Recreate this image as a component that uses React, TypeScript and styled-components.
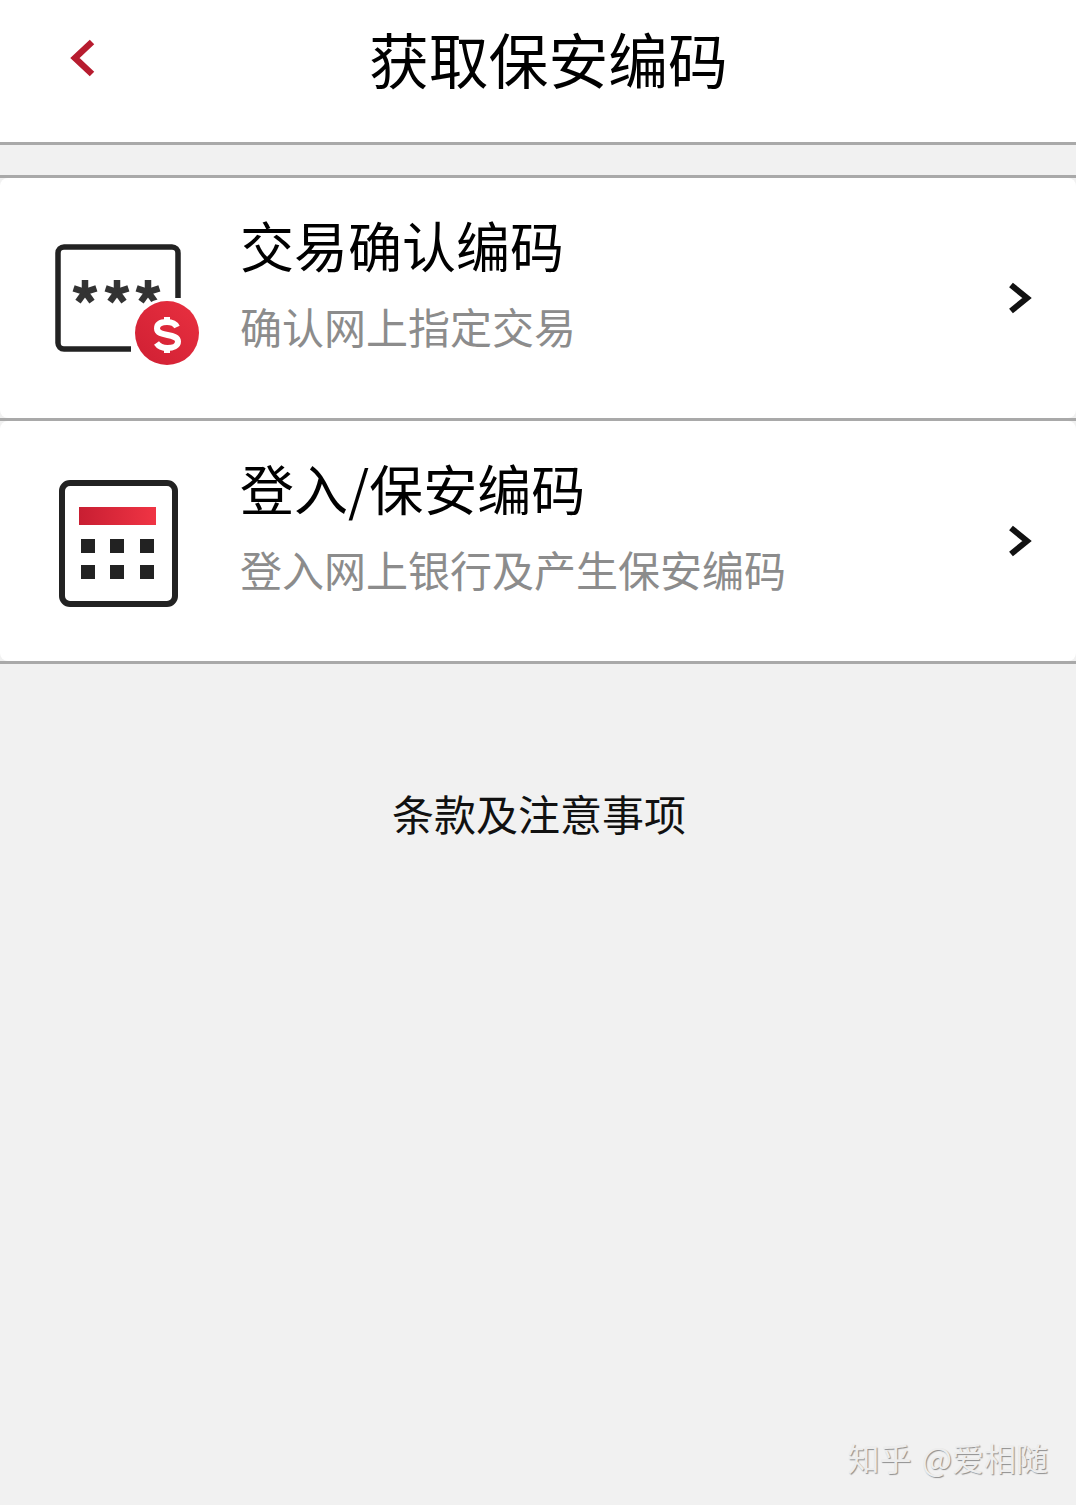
import React, { JSX } from 'react';
import styled, { createGlobalStyle } from 'styled-components';

const GlobalStyle = createGlobalStyle`
  html, body {
    margin: 0;
    padding: 0;
    background: #f1f1f1;
  }
  body {
    font-family: "Noto Sans CJK SC", "Noto Sans", sans-serif;
  }
`;

const Page = styled.div`
  position: relative;
  width: 1076px;
  height: 1505px;
  overflow: hidden;
  background: #f1f1f1;
`;

const Header = styled.header`
  display: grid;
  grid-template-columns: 369px auto;
  align-items: center;
  height: 116px;
  padding-bottom: 26px;
  background: #fff;
  border-bottom: 3px solid #a9a9a9;
`;

const BackIcon = styled.svg`
  display: block;
  width: 30px;
  height: 42px;
  margin: 0 0 0 70px;
`;

const Title = styled.h1`
  margin: 0;
  font-size: 59.8px;
  font-weight: 400;
  line-height: 116px;
  color: #000;
`;

const List = styled.div`
  margin-top: 30px;
  border-top: 3px solid #a9a9a9;
`;

const CardRow = styled.div`
  border-bottom: 3px solid #a9a9a9;
`;

const Card = styled.div`
  display: grid;
  grid-template-columns: 50px 190px 1fr 76px;
  align-items: center;
  height: 240px;
  background: #fff;
  border-radius: 8px;
`;

const CardIcon = styled.svg`
  display: block;
  grid-column: 2;
  width: 160px;
  height: 140px;
`;

const CardText = styled.div`
  display: flex;
  flex-direction: column;
  gap: 28px;
  margin-top: -29px;
`;

const CardTitle = styled.div`
  font-size: 54px;
  line-height: 56px;
  color: #000;
  white-space: nowrap;
`;

const CardSub = styled.div`
  font-size: 42px;
  line-height: 50px;
  color: #8c8c8c;
  white-space: nowrap;
`;

const Chevron = styled.svg`
  display: block;
  width: 30px;
  height: 42px;
  margin-left: 4px;
`;

const Terms = styled.div`
  margin-top: 119px;
  padding-left: 2px;
  font-size: 42px;
  line-height: 60px;
  text-align: center;
  color: #111;
`;

const Watermark = styled.div`
  position: absolute;
  right: 28px;
  top: 1435px;
  font-size: 32px;
  line-height: 44px;
  word-spacing: 3px;
  color: #ededed;
  white-space: pre;
  text-shadow: 1px 1px 1px #8e8e8e;
`;

const STAR_ARMS: string[] = ['0 -12', '11.4 -3.7', '7 9.7', '-7 9.7', '-11.4 -3.7'];

function KeyIcon(): JSX.Element {
	const stars: number[] = [35, 67, 98];
	return (
		<CardIcon viewBox="0 0 160 140">
			<defs>
				<linearGradient id="badge" x1="0" y1="1" x2="1" y2="0">
					<stop offset="0" stopColor="#cf1f33" />
					<stop offset="1" stopColor="#e93040" />
				</linearGradient>
			</defs>
			<path d="M81 121H14a6 6 0 0 1-6-6V25a6 6 0 0 1 6-6h108a6 6 0 0 1 6 6v45" fill="none" stroke="#222" strokeWidth="5.5" />
			{stars.map((x: number) => (
				<g key={x} stroke="#333" strokeWidth="6.5">
					{STAR_ARMS.map((arm: string) => <path key={arm} d={`M${x} 64l${arm}`} />)}
				</g>
			))}
			<circle cx="117" cy="105" r="35" fill="#fff" />
			<circle cx="117" cy="105" r="32" fill="url(#badge)" />
			<path d="M127 99c-2-4-6-5-10-5c-6 0-10 2-10 6.5c0 9 21 4 21 13c0 4.5-5 6.5-10.5 6.5c-4.5 0-9-2-11-5" fill="none" stroke="#fff" strokeWidth="6" />
			<path d="M117 89v6M117 119v6" stroke="#fff" strokeWidth="6" />
		</CardIcon>
	);
}

function TokenIcon(): JSX.Element {
	const columns: number[] = [38, 67, 97];
	const rows: number[] = [75, 101];
	return (
		<CardIcon viewBox="0 0 160 140">
			<defs>
				<linearGradient id="bar" x1="0" y1="0" x2="1" y2="0">
					<stop offset="0" stopColor="#c81e32" />
					<stop offset="1" stopColor="#f03444" />
				</linearGradient>
			</defs>
			<rect x="12" y="12" width="113" height="121" rx="8" fill="none" stroke="#222" strokeWidth="6" />
			<rect x="29" y="36" width="77" height="18" fill="url(#bar)" />
			{rows.map((y: number) => columns.map((x: number) => (
				<rect key={`${x}-${y}`} x={x - 7} y={y - 7} width="14" height="14" fill="#222" />
			)))}
		</CardIcon>
	);
}

function RowChevron(): JSX.Element {
	return (
		<Chevron viewBox="0 0 30 42">
			<path d="M7 8l16 13-16 13" fill="none" stroke="#111" strokeWidth="6" />
		</Chevron>
	);
}

function App(): JSX.Element {
	return (
		<Page>
			<GlobalStyle />
			<Header>
				<BackIcon viewBox="0 0 30 42">
					<path d="M22 5L5 21l17 16" fill="none" stroke="#b71c2f" strokeWidth="6.5" />
				</BackIcon>
				<Title>获取保安编码</Title>
			</Header>
			<List>
				<CardRow>
					<Card>
						<KeyIcon />
						<CardText>
							<CardTitle>交易确认编码</CardTitle>
							<CardSub>确认网上指定交易</CardSub>
						</CardText>
						<RowChevron />
					</Card>
				</CardRow>
				<CardRow>
					<Card>
						<TokenIcon />
						<CardText>
							<CardTitle>登入/保安编码</CardTitle>
							<CardSub>登入网上银行及产生保安编码</CardSub>
						</CardText>
						<RowChevron />
					</Card>
				</CardRow>
			</List>
			<Terms>条款及注意事项</Terms>
			<Watermark>知乎 @爱相随</Watermark>
		</Page>
	);
}

export default App;
